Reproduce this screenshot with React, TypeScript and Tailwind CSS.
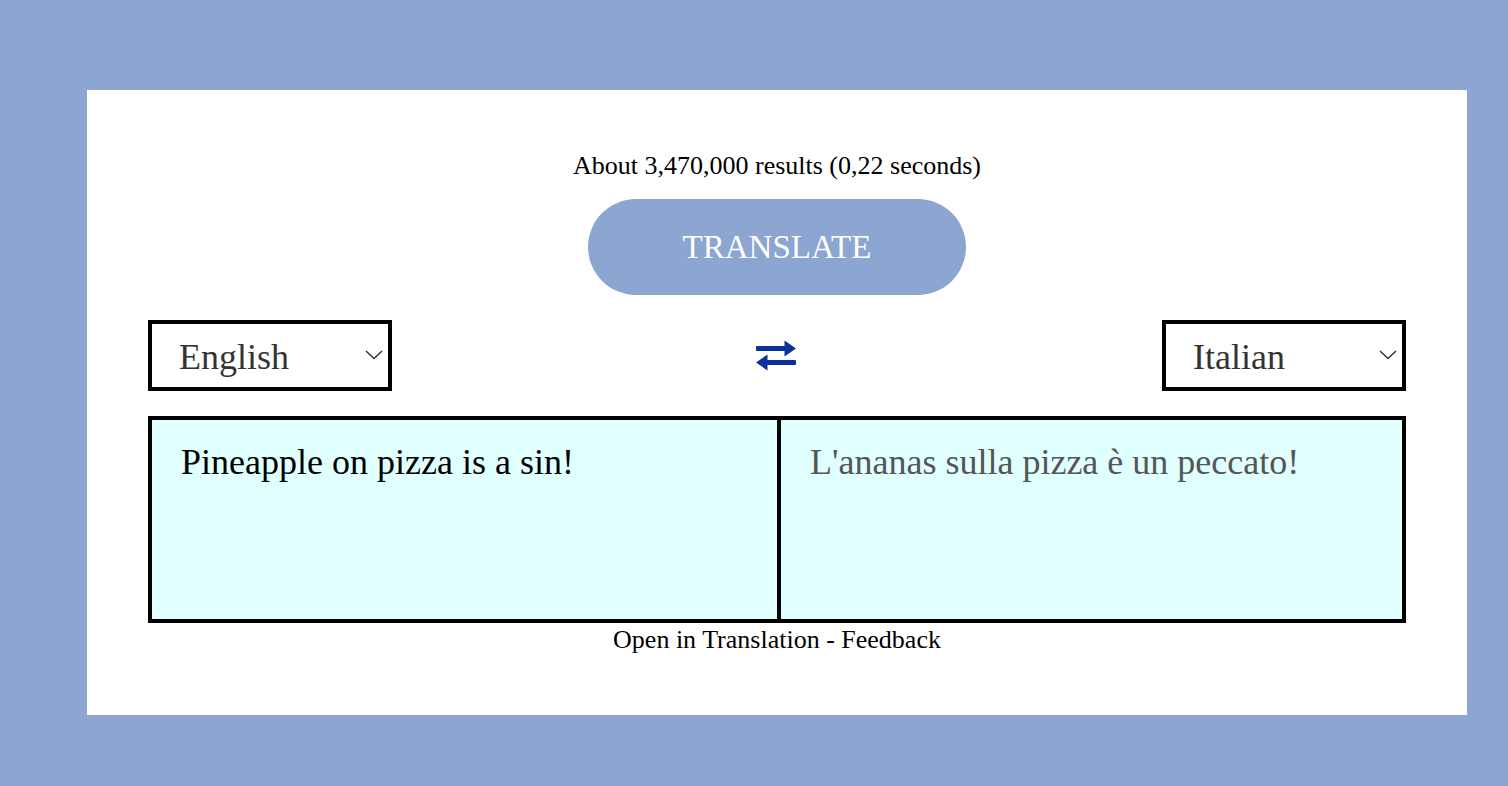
import React, { useState } from 'react';

const SwapIcon: React.FC = () => (
  <svg width="40" height="32" viewBox="0 0 40 32" fill="#0c319c" aria-hidden="true">
    <rect x="0" y="6" width="31" height="5" rx="1" />
    <path d="M28.5 0.5 L40 8.5 L28.5 16.5 Z" strokeLinejoin="round" />
    <rect x="9" y="20" width="31" height="5" rx="1" />
    <path d="M11.5 14.5 L0 22.5 L11.5 30.5 Z" strokeLinejoin="round" />
  </svg>
);

const Chevron: React.FC = () => (
  <svg width="18" height="10" viewBox="0 0 18 10" fill="none" stroke="#333" strokeWidth="1.5">
    <path d="M1 1 L9 8.5 L17 1" />
  </svg>
);

const LanguageSelect: React.FC<{ value: string; options: string[]; onChange: (v: string) => void }> = ({ value, options, onChange }) => (
  <div className="relative w-[244px] h-[71px] border-[4px] border-black bg-white">
    <select
      value={value}
      onChange={(e) => onChange(e.target.value)}
      className="appearance-none w-full h-full bg-transparent pl-[27px] pr-10 pt-[2px] text-[36px] text-[#333] outline-none"
      style={{ fontFamily: '"Liberation Serif", "Times New Roman", serif' }}
    >
      {options.map((o) => (
        <option key={o} value={o}>{o}</option>
      ))}
    </select>
    <span className="pointer-events-none absolute right-[5px] top-[26px]">
      <Chevron />
    </span>
  </div>
);

const LANGS = ['English', 'Italian', 'French', 'German', 'Spanish'];

export default function App() {
  const [from, setFrom] = useState('English');
  const [to, setTo] = useState('Italian');
  const [source, setSource] = useState('Pineapple on pizza is a sin!');

  const swap = () => {
    setFrom(to);
    setTo(from);
  };

  return (
    <div
      className="min-h-[786px] w-full bg-[#8ca5d1] pt-[90px] pl-[87px]"
      style={{ fontFamily: '"Liberation Serif", "Times New Roman", serif' }}
    >
      <div className="w-[1380px] h-[625px] bg-white flex flex-col items-center pt-[59px] px-[61px]">
        {/* Results count */}
        <div className="pt-[2px] text-[26px] leading-[30px] text-black">About 3,470,000 results (0,22 seconds)</div>

        {/* Translate button */}
        <button className="mt-[18px] w-[378px] h-[96px] rounded-full bg-[#8ca5d1] text-white text-[33px] leading-none">
          TRANSLATE
        </button>

        {/* Language pickers */}
        <div className="mt-[25px] w-full flex items-center justify-between">
          <LanguageSelect value={from} options={LANGS} onChange={setFrom} />
          <button onClick={swap} className="mr-[2px]">
            <SwapIcon />
          </button>
          <LanguageSelect value={to} options={LANGS} onChange={setTo} />
        </div>

        {/* Text panes */}
        <div className="mt-[25px] w-full h-[207px] border-[4px] border-black bg-[#e0ffff] grid grid-cols-2">
          <textarea
            value={source}
            onChange={(e) => setSource(e.target.value)}
            className="resize-none bg-transparent pl-[29px] pt-[22px] text-[36px] leading-[41px] text-black outline-none"
          />
          <div className="border-l-[4px] border-black pl-[29px] pt-[22px] text-[36px] leading-[41px] text-[#555]">
            L'ananas sulla pizza è un peccato!
          </div>
        </div>

        {/* Footer */}
        <div className="pt-[2px] text-[26px] leading-[30px] text-black">Open in Translation - Feedback</div>
      </div>
    </div>
  );
}
